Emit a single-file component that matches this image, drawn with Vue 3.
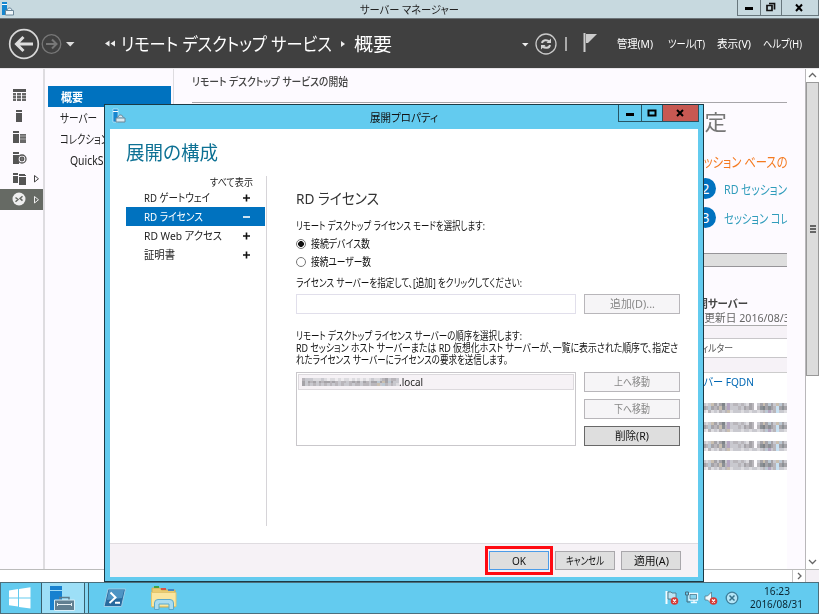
<template>
  <div class="desktop">
    <!-- Server Manager window -->
    <header class="titlebar">
      <svg class="app-icon" width="16" height="16" viewBox="0 0 16 16">
        <path d="M2 1h5v13H2z" fill="#1687d0" />
        <path d="M2 3.5h5" stroke="#fff" />
        <path d="M5.500 9.500h8v4.500h-8zM6.500 9.500l2-2.500h2l2 2.500" fill="#eef6fa" stroke="#6b8799" />
      </svg>
      <span class="titlebar-text"><span v-fit="99">サーバー マネージャー</span></span>
      <div class="win-buttons">
        <span class="win-btn"><svg width="22" height="15"><path d="M7 8.5h8" stroke="#000" stroke-width="3" /></svg></span>
        <span class="win-btn restore"><svg width="20" height="15"><path d="M8 3.500h5.500v6M6 5.500h5v5H6z" fill="none" stroke="#111" stroke-width="1.7" /></svg></span>
        <span class="win-btn close"><svg width="36" height="15"><path d="M14 4.500l6 6.500M20 4.500l-6 6.500" stroke="#000" stroke-width="2" /></svg></span>
      </div>
    </header>

    <div class="navbar">
      <svg class="nav-history" width="80" height="48" viewBox="0 0 80 48">
        <circle cx="24" cy="24" r="14.3" fill="none" stroke="#d8d8d8" stroke-width="1.7" />
        <path d="M33 24H17M23.500 17l-7 7 7 7" fill="none" stroke="#dedede" stroke-width="3" />
        <circle cx="51.500" cy="24" r="9.300" fill="none" stroke="#777" stroke-width="1.300" />
        <path d="M46 24h10M52 19.500l4.500 4.500-4.500 4.500" fill="none" stroke="#777" stroke-width="2" />
        <path d="M66 22h8.500l-4.250 4.500z" fill="#ddd" />
      </svg>
      <svg class="crumb-back" width="14" height="10"><path d="M5.500 1.500v6L1 4.500zM11 1.500v6L6.500 4.500z" fill="#eee" /></svg>
      <span class="crumb"><span v-fit="211">リモート デスクトップ サービス</span></span>
      <svg class="crumb-sep" width="6" height="10"><path d="M1 2v6l4-3z" fill="#eee" /></svg>
      <span class="crumb"><span v-fit="38">概要</span></span>
      <svg class="nav-tools" width="80" height="48" viewBox="0 0 80 48">
        <path d="M2 23h6.500l-3.250 3.500z" fill="#eee" />
        <circle cx="26" cy="24" r="10" fill="none" stroke="#c9c9c9" stroke-width="1.300" />
        <path d="M22 23c.5-3 5-4 7.500-1M30 25c-.5 3-5 4-7.500 1" fill="none" stroke="#d2d2d2" stroke-width="2" />
        <path d="M31 18.500v4.500h-4.500zM21 29.500V25h4.500z" fill="#d2d2d2" />
        <path d="M46 17v14" stroke="#aaa" stroke-width="2" />
        <path d="M64.500 13v19" stroke="#ccc" stroke-width="2" />
        <path d="M66 14h11l-9 9h-2z" fill="#ccc" />
      </svg>
      <span v-for="m in menus" :key="m.label" class="menu-item" :style="{ width: m.slot + 'px' }"><span v-fit="m.width">{{ m.label }}</span></span>
    </div>

    <div class="workspace">
      <aside class="rail">
        <div v-for="(icon, i) in railIcons" :key="i" :class="['rail-item', i === 5 ? 'rail-active' : '']">
          <svg width="16" height="16" viewBox="0 0 16 16" :fill="i === 5 ? '#eee' : '#555'">
            <path :d="icon" />
            <path v-if="i === 0" d="M2 6h3v8H2zM6 6h4v8H6zM11 6h4v8h-4z" fill="#777" opacity=".55" />
            <path v-if="i === 2" d="M9 5h6v9H9z" fill="#777" opacity=".6" />
            <g v-if="i === 3" fill="none" stroke="#555" stroke-width="1.300"><circle cx="11" cy="9" r="4" fill="#fdfaff" /><circle cx="11" cy="9" r="1.800" fill="#777" /></g>
            <g v-if="i === 5"><circle cx="8" cy="8" r="6.500" /><path d="M4.500 6.500l2.500 2-2.500 2.200M11.500 5.200L9 7.400l2.500 2.200" fill="none" stroke="#666a64" stroke-width="1.500" /></g>
          </svg>
          <svg v-if="i > 3" class="rail-arrow" width="7" height="9"><path d="M1.500 1.500v6.500l4-3.250z" fill="none" :stroke="i === 5 ? '#eee' : '#444'" /></svg>
        </div>
      </aside>

      <nav class="sidenav">
        <div class="side-item side-active"><span v-fit="22">概要</span></div>
        <div class="side-item"><span v-fit="37">サーバー</span></div>
        <div class="side-item"><span v-fit="49">コレクション</span></div>
        <div class="side-item side-child"><span v-fit="113">QuickSessionCollection</span></div>
      </nav>

      <main class="content">
        <h2 class="content-title"><span v-fit="156">リモート デスクトップ サービスの開始</span></h2>
        <section class="start-panel">
          <div class="start-heading"><span v-fit="45">設定</span></div>
          <div class="start-sub"><span v-fit="117">セッション ベースの展開</span></div>
          <div class="step"><i class="step-num">2</i><span v-fit="94">RD セッション ホスト</span></div>
          <div class="step"><i class="step-num">3</i><span v-fit="101">セッション コレクション</span></div>
        </section>
        <div class="panel-bar"></div>
        <div class="server-title"><span v-fit="61">展開サーバー</span></div>
        <div class="server-date"><span v-fit="113">最終更新日 2016/08/31</span></div>
        <section class="server-panel">
          <div class="filter"><span v-fit="39">フィルター</span></div>
          <div class="server-table">
            <div class="server-head"><span v-fit="70">サーバー FQDN</span></div>
            <div v-for="r in 4" :key="r" class="masked-row">
              <b v-for="(c, n) in maskRow" :key="n" :style="{ background: c }"></b>
            </div>
          </div>
        </section>
      </main>

      <div class="vscroll">
        <span class="scroll-btn"><svg width="13" height="12"><path d="M3 8l3.500-3.500L10 8" fill="none" stroke="#666" stroke-width="1.300" /></svg></span>
        <div class="thumb"><i></i><i></i><i></i></div>
        <span class="scroll-btn down"><svg width="13" height="12"><path d="M3 4l3.500 3.500L10 4" fill="none" stroke="#666" stroke-width="1.300" /></svg></span>
      </div>
    </div>
    <div class="hscroll">
      <span class="scroll-right"><svg width="12" height="12"><path d="M5 3l3 3-3 3" fill="none" stroke="#666" stroke-width="1.300" /></svg></span>
      <span class="scroll-corner"></span>
    </div>

    <!-- Deployment properties dialog -->
    <div class="dialog">
      <div class="dialog-title">
        <svg class="app-icon" width="16" height="16" viewBox="0 0 16 16">
          <path d="M2 1h5v13H2z" fill="#1687d0" stroke="#dff3fb" stroke-width=".6" />
          <path d="M2 3.500h5" stroke="#fff" />
          <path d="M5 10h9v4H5zM6.500 9.500l2-2.500h2l2 2.500" fill="#dceaf1" stroke="#6b8799" />
        </svg>
        <span class="dialog-title-text"><span v-fit="68">展開プロパティ</span></span>
        <div class="dialog-buttons">
          <span class="win-btn"><svg width="22" height="16"><path d="M7 9.500h8" stroke="#000" stroke-width="3" /></svg></span>
          <span class="win-btn"><svg width="20" height="16"><path d="M6.500 5.500h7v5h-7z" fill="none" stroke="#000" stroke-width="2" /></svg></span>
          <span class="win-btn close red"><svg width="36" height="16"><path d="M14 5l6 6M20 5l-6 6" stroke="#000" stroke-width="2" /></svg></span>
        </div>
      </div>
      <div class="dialog-body">
        <h1 class="dialog-heading"><span v-fit="92">展開の構成</span></h1>
        <div class="dialog-columns">
          <div class="tree">
            <div class="tree-all"><span v-fit="43">すべて表示</span></div>
            <div v-for="item in tree" :key="item.label" :class="['tree-item', item.active ? 'tree-active' : '']">
              <span v-fit="item.width">{{ item.label }}</span>
              <svg class="tree-sign" width="8" height="8"><path :d="item.active ? 'M1 4h7' : 'M1 4h7M4.500 .5v7'" :stroke="item.active ? '#fff' : '#111'" stroke-width="1.600" /></svg>
            </div>
          </div>
          <div class="form">
            <h2 class="form-heading"><span v-fit="83">RD ライセンス</span></h2>
            <p class="line mode"><span v-fit="189">リモート デスクトップ ライセンス モードを選択します:</span></p>
            <label class="radio"><i class="dot checked"></i><span v-fit="59">接続デバイス数</span></label>
            <label class="radio"><i class="dot"></i><span v-fit="60">接続ユーザー数</span></label>
            <p class="line specify"><span v-fit="226">ライセンス サーバーを指定して、[追加] をクリックしてください:</span></p>
            <div class="form-row">
              <div class="text-input"></div>
              <button class="btn disabled"><span v-fit="45">追加(D)...</span></button>
            </div>
            <div class="order-text">
              <p class="line"><span v-fit="226">リモート デスクトップ ライセンス サーバーの順序を選択します:</span></p>
              <p class="line"><span v-fit="382">RD セッション ホスト サーバーまたは RD 仮想化ホスト サーバーが、一覧に表示された順序で、指定さ</span></p>
              <p class="line"><span v-fit="212">れたライセンス サーバーにライセンスの要求を送信します。</span></p>
            </div>
            <div class="form-row">
              <div class="list">
                <div class="list-item">
                  <div class="masked-name"><b v-for="(c, n) in maskName" :key="n" :style="{ background: c }"></b></div>
                  <span v-fit="24">.local</span>
                </div>
              </div>
              <div class="list-buttons">
                <button class="btn disabled"><span v-fit="36">上へ移動</span></button>
                <button class="btn disabled"><span v-fit="36">下へ移動</span></button>
                <button class="btn strong"><span v-fit="34">削除(R)</span></button>
              </div>
            </div>
          </div>
        </div>
      </div>
      <footer class="dialog-footer">
        <div class="ok-frame"><button class="btn ok"><span v-fit="14">OK</span></button></div>
        <button class="btn"><span v-fit="38">キャンセル</span></button>
        <button class="btn"><span v-fit="35">適用(A)</span></button>
      </footer>
    </div>

    <!-- Taskbar -->
    <footer class="taskbar">
      <div class="task start">
        <svg width="22" height="22" viewBox="0 0 22 22" fill="#fff"><path d="M0 3.500l9-1.400v8.300H0zM10 2L21.500 .3v10.100H10zM0 11.400h9v8.200l-9-1.300zM10 11.400h11.500v10.200L10 19.900z" /></svg>
      </div>
      <div class="task active">
        <svg width="28" height="28" viewBox="0 0 28 28">
          <path d="M2 2h12v24H2z" fill="#1781cf" /><path d="M2 6.500h12" stroke="#9fdbf6" />
          <path d="M12 16v-2.500h9V16" fill="none" stroke="#5c7b8b" stroke-width="1.500" />
          <path d="M6.500 16h20v10.500h-20z" fill="#617f91" stroke="#d5edf7" /><path d="M9 20.500h15M9.500 19v3M23.500 19v3" stroke="#e6f0f4" />
        </svg>
      </div>
      <div class="task-stack"></div>
      <div class="task shell">
        <svg width="24" height="20" viewBox="0 0 24 20">
          <path d="M5 1h17.500l-4 17.500H1z" fill="#286a9e" stroke="#9fcde6" />
          <path d="M6 2h15l-2 8-15 2z" fill="#4e94c4" />
          <path d="M7.500 4.500l5 5-6 5.500M12 14.800h5" fill="none" stroke="#fff" stroke-width="2" />
        </svg>
      </div>
      <div class="task explorer">
        <svg width="28" height="26" viewBox="0 0 28 26">
          <path d="M2 3h8l1.500 2H25v17H2z" fill="#e9cc72" stroke="#cfae55" />
          <path d="M4 2h5" stroke="#3ea345" stroke-width="2" /><path d="M11 4h5" stroke="#d65345" stroke-width="2" /><path d="M18 5h6" stroke="#4387c8" stroke-width="2" />
          <path d="M1.500 7.500h24.500v14H1.500z" fill="#f9e6a0" stroke="#e2c66f" />
          <path d="M4.500 24.500V18q0-3.500 3.500-3.500h12q3.500 0 3.500 3.500v6.500H19V19H9v5.500z" fill="#a9dcf0" stroke="#5ba9cb" />
        </svg>
      </div>
      <div class="tray">
        <svg width="76" height="18" viewBox="0 0 76 18">
          <path d="M1.500 2v13" stroke="#f5fbfd" stroke-width="2" /><path d="M3 3h3l1 1h4v7H7L6 10H3z" fill="#b9e4f4" stroke="#496a78" stroke-width=".8" />
          <circle cx="9.500" cy="12" r="3.800" fill="#d63a34" /><path d="M8 10.500l3 3M11 10.500l-3 3" stroke="#fff" stroke-width="1.300" />
          <path d="M24 4.500h8.500v6.500H24zM26 13.500h6M29 11v2.500" fill="#86d5f0" stroke="#eefaff" stroke-width="1.300" />
          <path d="M20.500 3h3v3h-3zM22 6v7h3" fill="none" stroke="#4a6d7e" /><path d="M25 5.500h6.500v4.500H25z" fill="none" stroke="#4a6d7e" stroke-width=".7" />
          <path d="M40 7h2.500l4-4v12l-4-4H40z" fill="#f0fafd" stroke="#557888" stroke-width=".8" />
          <circle cx="48.500" cy="12" r="3.800" fill="#d63a34" /><path d="M47 10.500l3 3M50 10.500l-3 3" stroke="#fff" stroke-width="1.300" />
          <circle cx="67" cy="9" r="5.800" fill="#b5e6f7" stroke="#3f7e99" stroke-width="1.300" /><path d="M64.500 6.500l5 5M69.500 6.500l-5 5" stroke="#37728c" stroke-width="1.500" />
        </svg>
      </div>
      <div class="clock">
        <div><span v-fit="26">16:23</span></div>
        <div><span v-fit="53">2016/08/31</span></div>
      </div>
    </footer>
  </div>
</template>

<script setup>
// UI kana are narrower than the fallback font, so labels are squeezed to a given width
const vFit = {
  mounted(el, { value }) {
    el.style.display = 'inline-block';
    const natural = el.getBoundingClientRect().width;
    el.style.transform = `scaleX(${value / natural})`;
    el.style.marginRight = `${value - natural}px`;
  }
};

const menus = [
  { label: '管理(M)', width: 36, slot: 51 },
  { label: 'ツール(T)', width: 37, slot: 49 },
  { label: '表示(V)', width: 34, slot: 46 },
  { label: 'ヘルプ(H)', width: 39, slot: 39 }
];

const tree = [
  { label: 'RD ゲートウェイ', width: 66 },
  { label: 'RD ライセンス', width: 59, active: true },
  { label: 'RD Web アクセス', width: 78 },
  { label: '証明書', width: 31 }
];

const railIcons = [
  'M2 2h13v3H2zM2 6h3v2H2zM2 9h3v2H2zM2 12h3v2H2zM6 6h4v2H6zM6 9h4v2H6zM6 12h4v2H6zM11 6h4v2h-4zM11 9h4v2h-4zM11 12h4v2h-4z',
  'M5 2h6v2H5zM5 5h6v9H5z',
  'M2 2h6v2H2zM2 5h6v9H2zM9 5h6v1.500H9zM9 7.500h6v2H9zM9 10.500h6V14H9z',
  'M2 2h6v2H2zM2 5h6v9H2z',
  'M2 2h5v2H2zM8 3h6v2H8zM2 5h5v7H2zM8 6h7v8H8zM10 4h5v1h-5z',
  ''
];

// Redacted names are pixelated: one letter per tile, three tile rows each
const shades = {
  a: '#8b9095', b: '#a5a3a8', c: '#b9b6bb', d: '#c9c9cf', e: '#dcdbdf', f: '#eeecef',
  g: '#fdfbfe', t: '#c9bfb1', u: '#b3a5c0', v: '#bcc8d3', w: '#c8e1f2', k: '#7f8488'
};
const tiles = (rows) => rows.join('').split('').map((s) => shades[s]);

const maskRow = tiles([
  'dedtbdbkdudccdcdebcgdbtbvbdtvbd',
  'bcvbcbtacudddcdbcbcgcakbabcwbab',
  'efcedecdctedddeddeddedcvudcwdde'
]);
const maskName = tiles([
  'cdddeeedefeefefeefefefefedeedcbdccd',
  'bdbcbdbcbbcbcdccdcbcbdbcdbbvbtbvbdd',
  'bdcdcdcdcdcdcdcddcdccdccdcctdvcdcde'
]);
</script>

<style>
body {
  margin: 0;
  overflow: hidden;
}
</style>

<style scoped>
.desktop {
  position: relative;
  display: flex;
  flex-direction: column;
  width: 819px;
  height: 614px;
  overflow: hidden;
  background: #fdfaff;
  color: #222;
  font-family: "Noto Sans", "Noto Sans CJK JP", sans-serif;
  font-size: 11px;
  line-height: 14px;
  font-feature-settings: "palt";
  white-space: nowrap;
}

.desktop * {
  box-sizing: border-box;
}

.desktop span {
  transform-origin: 0 50%;
}

svg {
  display: block;
  flex: none;
}

h1, h2, p {
  margin: 0;
  font-weight: 400;
}

.titlebar {
  display: flex;
  height: 19px;
  background: #c7d9df;
  border-bottom: 1px solid #6c7478;
}

.app-icon {
  margin: 1px 0 0;
}

.titlebar-text {
  flex: 1;
  padding-left: 344px;
  line-height: 19px;
  font-size: 11px;
}

.win-buttons {
  display: flex;
  height: 16px;
  border: solid #68777d;
  border-width: 0 1px 1px;
}

.win-btn {
  width: 22px;
}

.win-btn + .win-btn {
  width: 21px;
  border-left: 1px solid #68777d;
}

.win-btn + .win-btn.close {
  width: 37px;
}

.navbar {
  display: flex;
  align-items: center;
  height: 49px;
  background: #404040;
  color: #fff;
}

.crumb-back {
  margin: 0 3px 0 24px;
}

.crumb {
  font-size: 18px;
  line-height: 48px;
}

.crumb-sep {
  margin: 0 8px 0 8px;
}

.nav-tools {
  margin-left: 128px;
}

.menu-item {
  font-size: 11px;
}

.nav-tools + .menu-item {
  margin-left: 17px;
}

.workspace {
  display: flex;
  height: 501px;
  border-top: 1px solid #e8e6e9;
}

.rail {
  flex: none;
  width: 45px;
  padding-top: 16px;
  border-right: 2px solid #dedce0;
}

.rail-item {
  display: flex;
  align-items: center;
  height: 20.800px;
  padding-left: 11px;
}

.rail-active {
  background: #666a64;
}

.rail-arrow {
  margin-left: 6px;
}

.sidenav {
  flex: none;
  width: 129px;
  padding: 17px 2px 0 3px;
  border-right: 1px solid #dedce0;
}

.side-item {
  height: 21px;
  padding-left: 12px;
  font-size: 12px;
  line-height: 23px;
}

.side-active {
  padding-left: 13px;
  background: #0072bf;
  color: #fff;
  font-weight: 600;
}

.side-child {
  padding-left: 22px;
}

.content {
  display: flex;
  flex-direction: column;
  width: 613px;
  padding: 5px 0 0 18px;
  overflow: hidden;
}

.content-title {
  flex: none;
  height: 28px;
  color: #444;
  font-size: 11px;
  font-weight: 500;
  line-height: 16px;
}

.start-panel {
  flex: none;
  height: 151px;
  padding-left: 490px;
  border-top: 1px solid #a7a5a9;
}

.start-heading {
  height: 40px;
  color: #777;
  font-size: 22px;
  line-height: 37px;
}

.start-sub {
  height: 31px;
  padding-left: 11px;
  color: #f47a20;
  font-size: 14px;
  line-height: 38px;
}

.step {
  display: flex;
  align-items: center;
  height: 29px;
  padding-left: 13px;
  color: #2f9cbb;
  font-size: 13px;
}

.step-num {
  flex: none;
  width: 21px;
  height: 21px;
  margin-right: 8px;
  border-radius: 50%;
  background: #0072bf;
  color: #fff;
  font-style: normal;
  font-size: 14px;
  line-height: 21px;
  text-align: center;
}

.panel-bar {
  flex: none;
  height: 14px;
  background: #dedede;
  border: solid #969498;
  border-width: 1px 0;
}

.server-title {
  flex: none;
  height: 43px;
  padding-left: 495px;
  color: #444;
  font-weight: 600;
  line-height: 74px;
}

.server-date {
  flex: none;
  height: 15px;
  padding-left: 491px;
  color: #666;
  line-height: 16px;
}

.server-panel {
  flex: 1;
  padding-top: 12px;
  background: #f6f2f7;
  border-top: 1px solid #aaa;
}

.filter {
  height: 20px;
  padding-left: 502px;
  background: #fff;
  border: solid #c8c6c9;
  border-width: 1px 0;
  color: #555;
  font-size: 10px;
  line-height: 18px;
}

.server-table {
  height: 230px;
  margin-top: 14px;
  background: #fff;
  border-top: 1px solid #ccc;
}

.server-head {
  height: 30px;
  padding-left: 492px;
  color: #0068b4;
  line-height: 18px;
}

.masked-row {
  display: grid;
  grid-template-columns: repeat(31, 1fr);
  grid-template-rows: repeat(3, 1fr);
  height: 10px;
  margin: 0 0 9px 511px;
}

.vscroll {
  display: flex;
  flex-direction: column;
  flex: none;
  width: 14px;
  margin-left: 18px;
  background: #fff;
  border-left: 1px solid #b9b7ba;
}

.scroll-btn {
  height: 13px;
}

.thumb {
  display: flex;
  flex-direction: column;
  align-items: center;
  justify-content: center;
  gap: 1px;
  height: 294px;
  background: #dcdcdc;
  border: 1px solid #999;
}

.thumb i {
  width: 6px;
  height: 2px;
  background: #666;
}

.scroll-btn.down {
  margin-top: auto;
}

.hscroll {
  display: flex;
  height: 13px;
  background: #fff;
  border-top: 1px solid #bbb;
}

.scroll-right {
  width: 13px;
  margin-left: 792px;
  border-left: 1px solid #c4c4c4;
}

.scroll-corner {
  flex: 1;
  background: #f4f0f5;
  border-left: 1px solid #bbb;
}

/* Dialog floats over the manager window */
.dialog {
  position: absolute;
  left: 104px;
  top: 104px;
  width: 600px;
  height: 478px;
  padding: 0 5px;
  background: #63cbef;
  border: 1px solid #1b3a45;
}

.dialog-title {
  display: flex;
  height: 24px;
}

.dialog-title .app-icon {
  margin: 3px 0 0 1px;
}

.dialog-title-text {
  flex: 1;
  padding-left: 243px;
  color: #111;
  line-height: 25px;
}

.dialog-buttons {
  display: flex;
  height: 17px;
  margin-right: -1px;
  border: solid #275564;
  border-width: 0 1px 1px;
}

.dialog-buttons .win-btn + .win-btn {
  border-color: #275564;
}

.dialog-buttons .win-btn + .win-btn.close {
  width: 36px;
}

.red {
  background: #c75852;
}

.dialog-body {
  height: 414px;
  padding: 9px 15px 0 16px;
  background: #fff;
}

.dialog-heading {
  height: 38px;
  color: #0d7194;
  font-size: 19px;
  line-height: 30px;
}

.dialog-columns {
  display: flex;
}

.tree {
  width: 141px;
  height: 350px;
  padding-right: 1px;
  border-right: 1px solid #d6d4d8;
}

.tree-all {
  height: 12px;
  padding-left: 84px;
  font-size: 10px;
  line-height: 12px;
}

.tree-item {
  display: flex;
  align-items: center;
  height: 19.200px;
  padding-left: 18px;
}

.tree-sign {
  margin: 0 15px 0 auto;
}

.tree-active {
  background: #0072bf;
  color: #fff;
}

.form {
  flex: 1;
  padding-left: 29px;
}

.form-heading {
  height: 44px;
  color: #333;
  font-size: 15px;
  line-height: 45px;
}

.line {
  height: 12px;
  color: #111;
  line-height: 12px;
}

.mode {
  margin-bottom: 3px;
}

.radio {
  display: flex;
  align-items: center;
  height: 18px;
  color: #111;
}

.dot {
  width: 10px;
  height: 10px;
  margin-right: 5px;
  border: 1px solid #777;
  border-radius: 50%;
}

.checked {
  background: radial-gradient(circle, #111 2.600px, #fff 3.200px);
}

.specify {
  margin: 6px 0 5px;
}

.form-row {
  display: flex;
  gap: 8px;
}

.text-input {
  width: 280px;
  height: 20px;
  border: 1px solid #e1dfeb;
}

.btn {
  display: flex;
  align-items: center;
  justify-content: center;
  width: 96px;
  height: 20px;
  padding: 0;
  background: #dedede;
  border: 1px solid #a9a7ab;
  border-radius: 0;
  color: #111;
  font: inherit;
  font-feature-settings: inherit;
}

.disabled {
  background: #f6f5f7;
  border-color: #b8b6ba;
  color: #888;
}

.strong {
  border-color: #686868;
}

.order-text {
  padding: 16px 0 6px;
}

.list {
  width: 280px;
  height: 74px;
  padding: 1px;
  border: 1px solid #c9c7cb;
}

.list-item {
  display: flex;
  align-items: center;
  height: 16px;
  padding-left: 3px;
  background: #f6f2f6;
  border: 1px solid #dcd9dd;
}

.masked-name {
  display: grid;
  grid-template-columns: repeat(35, 1fr);
  grid-template-rows: repeat(3, 1fr);
  width: 97px;
  height: 8px;
  filter: blur(.5px);
}

.list-buttons {
  display: flex;
  flex-direction: column;
  gap: 7px;
}

.dialog-footer {
  display: flex;
  align-items: center;
  justify-content: flex-end;
  gap: 6px;
  height: 34px;
  padding-right: 17px;
  background: #f6f2f6;
  border-top: 1px solid #dfdce0;
}

.dialog-footer .btn {
  width: 60px;
  height: 19px;
}

.ok-frame {
  margin-right: -4px;
  padding: 2px 1px;
  border: 3px solid #ff0a12;
}

.dialog-footer .ok {
  border-color: #4b9ce8;
}

.taskbar {
  display: flex;
  height: 32px;
  background: #63cbef;
  border: 1px solid #4c6f7c;
}

.task {
  display: flex;
  align-items: center;
  justify-content: center;
}

.start {
  width: 40px;
  padding-right: 2px;
}

.active {
  width: 44px;
  padding-right: 2px;
  background: #9ddff7;
  border: solid #39606e;
  border-width: 0 1px;
}

.task-stack {
  width: 4px;
  background: #86d7f4;
  border-right: 1px solid #39606e;
}

.shell {
  width: 51px;
}

.explorer {
  width: 47px;
}

.tray {
  margin: 6px 0 0 478px;
}

.clock {
  flex: 1;
  padding: 1px 6px 0 0;
  color: #0b2530;
  line-height: 13px;
  text-align: center;
}
</style>
